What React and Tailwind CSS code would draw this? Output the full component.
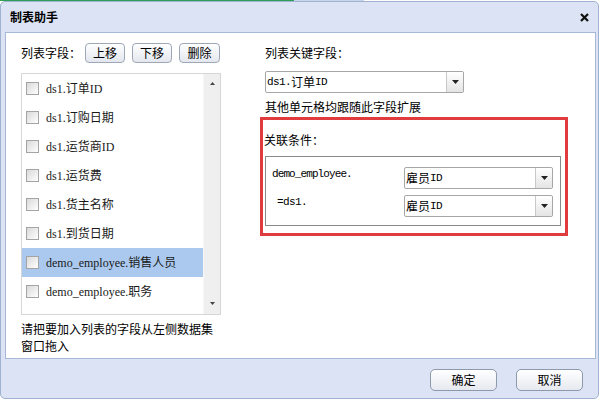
import React from 'react';

const fields = [
  { name: 'ds1.订单ID' },
  { name: 'ds1.订购日期' },
  { name: 'ds1.运货商ID' },
  { name: 'ds1.运货费' },
  { name: 'ds1.货主名称' },
  { name: 'ds1.到货日期' },
  { name: 'demo_employee.销售人员', selected: true },
  { name: 'demo_employee.职务' },
];

// --- small pieces ---
const Caret = () => (
  <svg width="7" height="4" viewBox="0 0 7 4">
    <path d="M0 0 L7 0 L3.5 4 Z" fill="#222" />
  </svg>
);

const Mono = ({ latin, cjk, latin2 }) => (
  <span className="flex items-center whitespace-nowrap">
    {latin && <span className="[font-family:'Liberation_Mono',monospace] text-[11px] tracking-[-0.6px]">{latin}</span>}
    {cjk && <span className="text-[12px]">{cjk}</span>}
    {latin2 && <span className="[font-family:'Liberation_Mono',monospace] text-[11px] tracking-[-0.6px]">{latin2}</span>}
  </span>
);

const Select = ({ width, children }) => (
  <div className={`${width} h-[22px] flex bg-white border border-[#a7a7a7] rounded-[2px]`}>
    <div className="flex-1 flex items-center pl-[1px] overflow-hidden">{children}</div>
    <div className="w-[17px] flex items-center justify-center border-l border-[#c9c9c9] rounded-r-[2px] bg-gradient-to-b from-white to-[#e4e4e4]">
      <Caret />
    </div>
  </div>
);

const SmallButton = ({ children, className = '' }) => (
  <button className={`h-[20px] flex items-center justify-center rounded-[4px] border border-[#9ea8b8] bg-gradient-to-b from-white to-[#e3e7ee] text-[12px] text-black ${className}`}>
    {children}
  </button>
);

const FooterButton = ({ children }) => (
  <button className="w-[67px] h-[22px] flex items-center justify-center rounded-[5px] border border-[#8d9aae] bg-gradient-to-b from-white to-[#e6e9ef] text-[12px] text-black">
    {children}
  </button>
);

const FieldRow = ({ field }) => (
  <div className={`h-[29px] flex items-center pl-[4px] gap-[7px] ${field.selected ? 'bg-[#abc9ef]' : ''}`}>
    <div className="w-[13px] h-[13px] shrink-0 border border-[#a4a4a4] bg-gradient-to-br from-[#d9d9d9] to-white" />
    <span className="[font-family:'Liberation_Serif','Noto_Sans_CJK_SC',serif] text-[12px] text-[#1a1a1a] whitespace-nowrap">
      {field.name}
    </span>
  </div>
);

export default function App() {
  return (
    <div className="w-[600px] h-[404px] bg-white overflow-hidden flex flex-col [font-family:'Noto_Sans_CJK_SC',sans-serif] text-[12px] text-black">
      {/* top strip */}
      <div className="h-[1px] flex shrink-0">
        <div className="w-[294px] bg-[#2f9f58]" />
        <div className="w-[70px] bg-[#c9d5e8]" />
      </div>

      {/* DIALOG */}
      <div className="w-[599px] h-[398px] shrink-0 bg-[#dbe3f4] border border-[#9fb2d1] rounded-[5px] flex flex-col">
        {/* title bar */}
        <div className="h-[30px] flex items-center justify-between pl-[9px] pr-[9px]">
          <span className="font-bold text-[12px]">制表助手</span>
          <svg width="9" height="9" viewBox="0 0 9 9">
            <path d="M1 1 L8 8 M8 1 L1 8" stroke="#111" strokeWidth="2.2" />
          </svg>
        </div>

        {/* content panel */}
        <div className="ml-[4px] w-[591px] h-[327px] bg-white border border-[#a6b8d6] flex">
          {/* left column */}
          <div className="pl-[15px] pt-[10px] w-[216px] flex flex-col">
            <div className="h-[20px] flex items-center">
              <span className="w-[64px]">列表字段：</span>
              <div className="flex gap-[7px]">
                <SmallButton className="w-[40px]">上移</SmallButton>
                <SmallButton className="w-[40px]">下移</SmallButton>
                <SmallButton className="w-[41px]">删除</SmallButton>
              </div>
            </div>

            <div className="mt-[10px] w-[200px] h-[242px] border border-[#d6d6d6] flex">
              <div className="flex-1 pt-[0px]">
                {fields.map((f) => (
                  <FieldRow key={f.name} field={f} />
                ))}
              </div>
              <div className="w-[17px] bg-[#efefef] border-l border-[#f7f7f7] flex flex-col items-center justify-between pt-[8px] pb-[9px]">
                <svg width="5" height="3" viewBox="0 0 5 3"><path d="M0 3 L5 3 L2.5 0 Z" fill="#444" /></svg>
                <svg width="5" height="3" viewBox="0 0 5 3"><path d="M0 0 L5 0 L2.5 3 Z" fill="#444" /></svg>
              </div>
            </div>

            <p className="mt-[5px] leading-[17px] whitespace-nowrap">
              请把要加入列表的字段从左侧数据集<br />窗口拖入
            </p>
          </div>

          {/* right column */}
          <div className="ml-[38px] pt-[10px] flex flex-col">
            <div className="ml-[5px] h-[20px] flex items-center">列表关键字段：</div>
            <div className="ml-[5px] mt-[8px]">
              <Select width="w-[199px]">
                <Mono latin="ds1." cjk="订单" latin2="ID" />
              </Select>
            </div>
            <div className="ml-[5px] mt-[6px] leading-[16px]">其他单元格均跟随此字段扩展</div>

            {/* related conditions */}
            <div className="mt-[2px] w-[308px] border-[3px] border-[#e13c3d] pt-[12px] pl-[1px] pb-[7px]">
              <div className="leading-[16px]">关联条件：</div>
              <div className="mt-[8px] ml-[1px] w-[296px] border border-[#8a8a8a] pt-[10px] pb-[8px] px-[6px] flex flex-col gap-[6px]">
                <div className="flex">
                  <span className="w-[132px] leading-[14px] [font-family:'Liberation_Mono',monospace] text-[11px] tracking-[-0.9px] whitespace-nowrap">
                    demo_employee.
                  </span>
                  <Select width="w-[149px]">
                    <Mono cjk="雇员" latin2="ID" />
                  </Select>
                </div>
                <div className="flex">
                  <span className="w-[132px] pl-[5px] leading-[14px] [font-family:'Liberation_Mono',monospace] text-[11px] tracking-[-0.6px] whitespace-nowrap">
                    =ds1.
                  </span>
                  <Select width="w-[149px]">
                    <Mono cjk="雇员" latin2="ID" />
                  </Select>
                </div>
              </div>
            </div>
          </div>
        </div>

        {/* footer */}
        <div className="mt-[10px] flex justify-end gap-[19px] pr-[15px]">
          <FooterButton>确定</FooterButton>
          <FooterButton>取消</FooterButton>
        </div>
      </div>
    </div>
  );
}
